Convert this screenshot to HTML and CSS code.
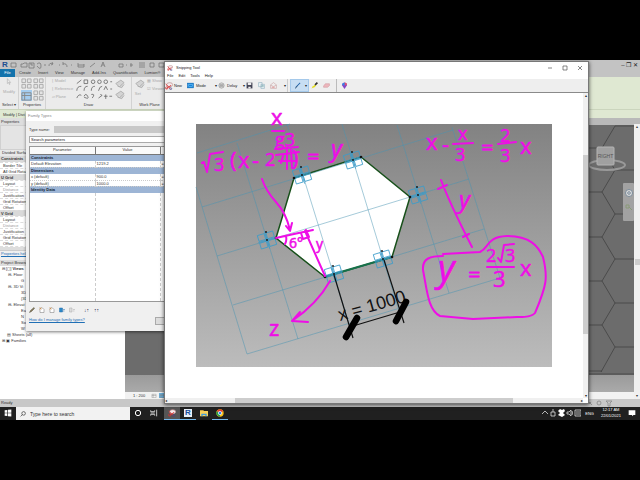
FILE: index.html
```html
<!DOCTYPE html>
<html lang="en">
<head>
<meta charset="utf-8">
<title>Snipping Tool</title>
<link rel="stylesheet" href="styles.css">
</head>
<body>
<svg class="defs" aria-hidden="true">
  <symbol id="i-snip" viewBox="0 0 12 12"><ellipse cx="7" cy="4" rx="4.5" ry="3" fill="#f4eaec" stroke="#b88" /><path d="M1 3l7 7M2 10l7-5" stroke="#d33" stroke-width="1.3"/><circle cx="2.5" cy="9" r="1.8" fill="none" stroke="#c33"/><circle cx="8.5" cy="10" r="1.5" fill="none" stroke="#448"/></symbol>
  <symbol id="i-page" viewBox="0 0 12 12"><path d="M2 2h5l3 3v6H2z" fill="#fff" stroke="#777"/><path d="M1 1l4 4M5 1L1 5" stroke="#e08020"/></symbol>
  <symbol id="i-grid" viewBox="0 0 12 12"><path d="M1 1h4v4H1zM7 1h4v4H7zM1 7h4v4H1zM7 7h4v4H7z" fill="#e4e4e4" stroke="#aaa"/></symbol>
  <symbol id="i-plane" viewBox="0 0 12 12"><path d="M1 6l6-4 4 3-6 5zM3 9l5 2 3-4" fill="#d4d4d4" stroke="#aaa"/></symbol>
  <symbol id="i-box" viewBox="0 0 12 12"><path d="M1 3h10v8H1zM1 6h10M4 3v8" fill="none" stroke="#888"/></symbol>
</svg>

<div class="screen">
<main class="desktop">

<section class="revit" aria-label="Revit">
  <div class="qat">
    <b class="logo">R</b>
    <svg viewBox="0 0 106 8" fill="none" stroke="#777" stroke-width="0.8"><path d="M1 2h5v4H1zM11 6V3h2l1-1h3v4zM19 2h5v5h-5zM21 2v2h2M27 3q4-3 4 2t-4 0M34 4h2M39 5q0-4 4-2M42 1l1 2-2 1M49 4h1M53 3q4-1 4 3M53 1v3M61 4h1M68 2v4h6V3M68 4h6M80 6l5-4M91 6l2-5 2 5M92 4h2"/></svg>
    <svg viewBox="0 0 50 8" fill="none" stroke="#777" stroke-width="0.8"><path d="M3 3h4v3H3zM10 4h1M15 2v4M14 4h3M23 2h6M23 4h6M23 6h6M34 2h4v4h-4zM43 2h5v4h-5z"/></svg>
    <span class="grow"></span>
    <span class="winmarks">– ❐ ✕</span>
  </div>
  <nav class="tabs">
    <a class="file" href="#">File</a><a href="#">Create</a><a href="#">Insert</a><a href="#">View</a><a href="#">Manage</a><a href="#">Add-Ins</a><a href="#">Quantification</a><a href="#">Lumion®</a>
  </nav>
  <div class="ribbon">
    <div class="panel select-panel">
      <svg viewBox="0 0 20 22"><path d="M7 3v9l2-2 2 4 1-1-2-3h3z" fill="#eee" stroke="#aaa"/></svg>
      <span class="dim">Modify</span><span class="cap">Select ▾</span>
    </div>
    <div class="panel props-panel">
      <div class="quad"><svg><use href="#i-grid"/></svg><svg><use href="#i-grid"/></svg><svg class="active"><use href="#i-box"/></svg><svg><use href="#i-grid"/></svg></div>
      <span class="cap">Properties</span>
    </div>
    <div class="panel draw-panel">
      <div class="draw-row">
        <div class="dim stack"><span>⌊ Model</span><span>⌊ Reference</span><span>▱ Plane</span></div>
        <svg viewBox="0 0 42 24" fill="none" stroke="#666" stroke-width="0.9"><path d="M2 6l5-4M10 2h4v4h-4zM2 14q0-5 5-5M10 14q0-5 4-5M18 14q0-5 4-5M26 14q1-5 4-5M32 13l2-4 2 4M2 22q2-5 5-3M10 20q2-4 4 0t-4 1M18 18q5-1 1 4M26 22l4-3-2-1M32 20h4M34 18v5"/><circle cx="20" cy="4" r="2"/><circle cx="27" cy="4" r="2"/><circle cx="34" cy="4" r="2"/><path d="M39 4h2M39 12h2M38 20h3"/></svg>
        <div class="planes"><svg><use href="#i-plane"/></svg><svg><use href="#i-plane"/></svg></div>
      </div>
      <span class="cap">Draw</span>
    </div>
    <div class="panel work-panel">
      <div class="work-row"><div class="dim stack"><svg><use href="#i-plane"/></svg><span>Set</span></div><div class="dim stack"><span>▦ Show</span><span>☑ Viewer</span></div></div>
      <span class="cap">Work Plane</span>
    </div>
    <div class="context-end"></div>
  </div>
  <div class="options">Modify | Divi</div>
  <div class="work">
    <aside class="dock">
      <h2>Properties</h2>
      <div class="preview"></div>
      <div class="type">Divided Surface</div>
      <table class="props">
        <tr class="grp"><td>Constraints</td></tr>
        <tr><td>Border Tile</td></tr><tr><td>All Grid Rotation</td></tr>
        <tr class="grp"><td>U Grid</td></tr>
        <tr><td>Layout</td></tr><tr class="off"><td>Distance</td></tr><tr><td>Justification</td></tr><tr><td>Grid Rotation</td></tr><tr><td>Offset</td></tr>
        <tr class="grp"><td>V Grid</td></tr>
        <tr><td>Layout</td></tr><tr class="off"><td>Distance</td></tr><tr><td>Justification</td></tr><tr><td>Grid Rotation</td></tr><tr><td>Offset</td></tr>
      </table>
      <div class="strip"></div>
      <div class="help"><a href="#">Properties help</a></div>
      <h2 class="browser-title">Project Browser</h2>
      <ul class="tree">
        <li>⊟ [◻] <b>Views</b></li>
        <li class="l2">⊟- Floor</li><li class="l3">G</li>
        <li class="l2">⊟- 3D Vi</li><li class="l3">3D</li><li class="l3">{3D</li>
        <li class="l2">⊟- Elevat</li><li class="l3">Ea</li><li class="l3">N</li><li class="l3">So</li><li class="l3">W</li>
        <li class="l1">▤ Sheets (all)</li><li>⊞ ▣ Families</li>
      </ul>
    </aside>
    <div class="view">
      <div class="viewbar-top"></div>
      <div class="canvas">
        <svg class="hexes" viewBox="0 0 45 250" preserveAspectRatio="xMaxYMin slice" fill="none" stroke="#3c3c3c" stroke-width="0.7"><path d="M26 1L13 23 26 45 13 67 26 89 13 112 26 134 13 156 26 178 13 200 26 222 12 247M26 1H45M26 45H45M26 89H45M26 134H45M26 178H45M26 222H45M13 23H0M13 67H0M13 112H0M13 156H0M13 200H0M13 246H0M0 249H45" /></svg>
        <svg class="cube" viewBox="0 0 40 30"><ellipse cx="19" cy="20" rx="18" ry="5" fill="none" stroke="#999" stroke-width="2"/><rect x="9" y="2" width="17" height="18" rx="1" fill="#a0a0a0" stroke="#b4b4b4"/><text x="17.500" y="13" text-anchor="middle">RIGHT</text></svg>
        <svg class="navbar" viewBox="0 0 11 38"><rect width="11" height="38" rx="1" fill="#a2a2a2"/><circle cx="6" cy="10" r="3.500" fill="#ddd" stroke="#7a8a99"/><circle cx="6" cy="10" r="1.300" fill="none" stroke="#789"/><path d="M3 22h3v3H3zM6 24l3 3" fill="none" stroke="#8a9a78"/></svg>
      </div>
      <div class="viewbar"><span>1 : 200</span><svg><use href="#i-box"/></svg><svg class="blue"><use href="#i-box"/></svg></div>
    </div>
    <div class="vscroll"><i>▴</i><b></b><i>▾</i></div>
  </div>
  <div class="status"><span>Ready</span><svg viewBox="0 0 30 8" fill="none" stroke="#888" stroke-width="0.8"><path d="M2 2l4 4M3 5l2-2M20 2h6l-2 2v3h-2V4z"/><circle cx="13" cy="4" r="2"/></svg></div>
</section>

<section class="dialog" aria-label="Family Types">
  <h1>Family Types</h1>
  <div class="typename"><label for="tn">Type name:</label><select id="tn" disabled><option></option></select></div>
  <input class="search" aria-label="Search parameters" value="Search parameters">
  <div class="tablebox">
  <table>
    <thead><tr><th>Parameter</th><th>Value</th><th></th></tr></thead>
    <tbody>
    <tr class="grp"><td colspan="3">Constraints</td></tr>
    <tr><td>Default Elevation</td><td>1219.2</td><td>=</td></tr>
    <tr class="grp"><td colspan="3">Dimensions</td></tr>
    <tr><td>x (default)</td><td>900.0</td><td>=</td></tr>
    <tr><td>y (default)</td><td>1000.0</td><td>=</td></tr>
    <tr class="grp"><td colspan="3">Identity Data</td></tr>
    <tr class="fill"><td></td><td></td><td></td></tr>
    </tbody>
  </table>
  </div>
  <div class="tools">
    <button aria-label="Edit"><svg viewBox="0 0 12 12"><path d="M1 11l2-4 7-6 1 2-6 6z" fill="#875" stroke="#554"/></svg></button>
    <button aria-label="New"><svg><use href="#i-page"/></svg></button>
    <button aria-label="Delete"><svg><use href="#i-page"/></svg></button>
    <button aria-label="Up"><svg viewBox="0 0 12 12"><path d="M1 2h6v8H1zM8 5h4M8 8h3" fill="#2b88c8" stroke="#2b6fa8"/></svg></button>
    <button aria-label="Down"><svg viewBox="0 0 12 12"><path d="M1 2h5v8H1zM8 5h4M8 8h3" fill="#ddd" stroke="#aaa"/></svg></button>
    <button class="sort" aria-label="Sort ascending">↓↑</button>
    <button class="sort" aria-label="Sort descending">↑↑</button>
  </div>
  <div class="dialog-foot"><a href="#">How do I manage family types?</a><button aria-label="OK"></button></div>
</section>

<section class="snip" aria-label="Snipping Tool">
  <header><svg class="ic"><use href="#i-snip"/></svg><span>Snipping Tool</span><span class="grow"></span><button aria-label="Minimize"><svg viewBox="0 0 8 8"><path d="M2 4h4"/></svg></button><button aria-label="Maximize"><svg viewBox="0 0 8 8"><path d="M2 2h4v4H2z"/></svg></button><button aria-label="Close"><svg viewBox="0 0 8 8"><path d="M2 2l4 4M6 2L2 6"/></svg></button></header>
  <nav class="menu"><a href="#">File</a><a href="#">Edit</a><a href="#">Tools</a><a href="#">Help</a></nav>
  <div class="bar">
    <button class="new"><svg class="big"><use href="#i-snip"/></svg>New</button>
    <button class="mode"><svg viewBox="0 0 12 10"><rect x="1" y="1" width="10" height="8" fill="#1184dc" stroke="#0a66b4"/><rect x="3" y="3" width="6" height="4" fill="none" stroke="#7cc5f5"/></svg>Mode<i>▾</i></button>
    <button class="delay"><svg viewBox="0 0 12 12"><circle cx="6" cy="6" r="4.500" fill="#ddd" stroke="#888"/><path d="M3 5h6M3 7h6" stroke="#666"/></svg>Delay<i>▾</i></button>
    <button class="sq" aria-label="Save"><svg viewBox="0 0 12 12"><path d="M1 1h10v10H1z" fill="#445" /><path d="M3 1h6v4H3zM4 8h4v3H4z" fill="#eee"/></svg></button>
    <button class="sq" aria-label="Copy"><svg viewBox="0 0 12 12"><path d="M1 1h6v7H1zM5 4h6v7H5z" fill="#eef4f6" stroke="#8ab"/><path d="M6 6h4M6 8h4" stroke="#7aa"/></svg></button>
    <button class="send" aria-label="Send"><svg viewBox="0 0 12 12"><path d="M1 5l5-4 5 4v6H1zM1 5l5 3 5-3" fill="#eee" stroke="#c9a2a2"/><path d="M3 9h5" stroke="#d66"/></svg><i>▾</i></button>
    <button class="pen" aria-label="Pen"><svg viewBox="0 0 12 12"><path d="M2 11l1-3 7-7 1 1-7 7z" fill="#1b5fa6"/><path d="M2 11l4-4" stroke="#234"/></svg><i>▾</i></button>
    <button class="sq" aria-label="Highlighter"><svg viewBox="0 0 12 12"><path d="M1 11l2-4 2 2z" fill="#e8e020"/><path d="M3 8l4-4 2 2-4 4z" fill="#e3dc1c"/><path d="M6 4l4-4 2 2-4 4z" fill="#333"/></svg></button>
    <button class="sq" aria-label="Eraser"><svg viewBox="0 0 12 12"><path d="M1 7l3-4h7v3L8 9H1z" fill="#edb6bc" stroke="#d39aa2"/></svg></button>
    <button class="paint" aria-label="Edit with Paint 3D"><svg viewBox="0 0 12 12"><path d="M6 12L2 6q-1-4 4-5 5 1 4 5z" fill="#8646c6"/><path d="M6 1q5 1 4 4L6 6z" fill="#e25072"/><path d="M2 5q0-3 4-4v5z" fill="#2f8be8"/></svg></button>
  </div>
  <div class="content">
    <div class="page">
      <svg class="drawing" viewBox="196 124 356 243" role="img" aria-label="Annotated hexagon">
        <defs><linearGradient id="bg" x1="0" y1="0" x2="0" y2="1"><stop offset="0" stop-color="#828282"/><stop offset="1" stop-color="#bcbcbc"/></linearGradient>
        <g id="node" fill="none" stroke="#3b9cc9" stroke-width="0.8"><g transform="rotate(-17)"><rect x="-8" y="-7" width="7" height="6"/><rect x="1" y="-7" width="7" height="6"/><rect x="-8" y="1" width="7" height="6"/><rect x="1" y="1" width="7" height="6"/><path d="M-9 0H9M0-9V9"/></g><circle cx="-1" cy="-8" r="0.900" fill="#111" stroke="none"/><circle cx="0" cy="0" r="0.900" fill="#111" stroke="none"/></g></defs>
        <rect x="196" y="124" width="356" height="243" fill="url(#bg)"/>
        <path class="hex" d="M294 178L361 157 410 197 392 257 325 277 276 238z"/>
        <path class="lines" d="M197 153L290 124M202 207L453 130M217 256L469 179M233 305L484 229M247 354L500 278M196 187L247 354M237 143L298 339M287 124L349 324M342 124L398 308M397 125L449 293M452 127L500 278"/>
        <path d="M325 277L334 274 392 257" stroke="#17704a" stroke-width="2" fill="none"/>
        <use href="#node" x="302" y="175"/><use href="#node" x="353" y="160"/><use href="#node" x="267" y="240"/><use href="#node" x="418" y="195"/><use href="#node" x="334" y="274"/><use href="#node" x="383" y="259"/>
        <g fill="#111"><circle cx="294" cy="178" r="1.300"/><circle cx="361" cy="157" r="1.300"/><circle cx="410" cy="197" r="1.300"/><circle cx="392" cy="257" r="1.300"/><circle cx="325" cy="277" r="1.300"/><circle cx="276" cy="238" r="1.300"/></g>
        <path d="M334 275L353 338M384 260L404 323M353 326L400 312" stroke="#111" stroke-width="1.200" fill="none"/>
        <text class="dim-text" transform="translate(340 321) rotate(-16)">x = 1000</text>
        <path d="M357 318L346 337M406 302L396 321" stroke="#000" stroke-width="6.500" stroke-linecap="round"/>
        <g class="ink">
          <path d="M202 163l2-1 3 10 3-18 13-2M272 131h12M275 149l23-2M276 155l23-3M287 147v22M279 161h17M291 148l1 20M283 156l-2 7M262 179Q266 191 276 202T290 230M286 226l4 5 2-8M276 238L294 234 313 230M305 231L325 276M301 233l2 6 6-2-3-7M286 236q1 5-1 8M330 281Q317 304 292 321M300 312l-8 9 16 1M453 144l20-1M498 144l18-2M441 180Q450 204 472 247M438 189l9-4M463 237l6-3M487 267h27M498 258l3 4 3-17 10-1"/>
          <path d="M443 254L480 252C490 247 486 237 507 236 530 236 538 246 543 257 548 277 547 285 535 313 531 318 517 317 517 317L473 319 440 316C428 310 427 290 423 270 422 258 431 256 443 256"/>
          <g class="s22"><text x="271" y="125">x</text><text x="238" y="168">x</text><text x="252" y="168">-</text><text x="230" y="168">(</text><text x="292" y="166">)</text><text x="307" y="164">=</text><text x="426" y="150">x</text><text x="442" y="152">-</text><text x="481" y="155">=</text><text x="520" y="154">x</text><text x="468" y="282">=</text><text x="520" y="276">x</text><text x="493" y="287">3</text><text x="269" y="336">z</text></g>
          <g class="s24 slant"><text x="331" y="157">y</text><text x="459" y="208">y</text></g>
          <g class="s18"><text x="214" y="171">3</text><text x="265" y="166">2</text><text x="275" y="146">g3</text><text x="458" y="140">x</text><text x="455" y="161">3</text><text x="500" y="142">2</text><text x="500" y="162">3</text><text x="486" y="262">2</text><text x="505" y="262">3</text></g>
          <text class="s36 slant" x="438" y="281">y</text>
          <g class="s14"><text x="289" y="248">6°</text><text x="316" y="249">y</text></g>
        </g>
      </svg>
    </div>
    <div class="sv"><i>▴</i><b></b><i>▾</i></div>
    <div class="sh"><i>◂</i><b></b><i>▸</i></div>
  </div>
</section>

<footer class="taskbar">
  <button class="start" aria-label="Start"><svg viewBox="0 0 12 12"><path d="M1 2l4-.6v4.200H1zM6 1.300L11 .6v5H6zM1 6.400h4v4.200L1 10zM6 6.400h5v5l-5-.7z" fill="#fff"/></svg></button>
  <label class="find"><svg viewBox="0 0 10 10"><circle cx="6" cy="4" r="3" fill="none" stroke="#222"/><path d="M4 6L1 9" stroke="#222"/></svg><input placeholder="Type here to search" aria-label="Type here to search"></label>
  <button aria-label="Cortana"><svg viewBox="0 0 12 12"><circle cx="6" cy="6" r="4" fill="none" stroke="#fff" stroke-width="1.500"/></svg></button>
  <button aria-label="Task view"><svg viewBox="0 0 12 12"><path d="M1 2v2h6V2M1 10V8h6v2M1 6h6M10 1v10" fill="none" stroke="#ddd" stroke-width="1.300"/></svg></button>
  <button class="on lit" aria-label="Snipping Tool"><svg><use href="#i-snip"/></svg></button>
  <button class="on" aria-label="Revit"><b>R</b></button>
  <button aria-label="Explorer"><svg viewBox="0 0 12 12"><path d="M0 2h5l1 1h6v8H0z" fill="#f7cf59"/><path d="M2 7h8v4H8V9H4v2H2z" fill="#3d9be0"/></svg></button>
  <button class="on" aria-label="Chrome"><svg viewBox="0 0 12 12"><circle cx="6" cy="6" r="5.500" fill="#fbc116"/><path d="M6 6L1.200 3.300A5.500 5.500 0 0 1 10.800 3.300z" fill="#e33b2e"/><path d="M6 6L1.200 3.300A5.500 5.500 0 0 0 6 11.500z" fill="#28a148"/><circle cx="6" cy="6" r="2.500" fill="#3b7ded" stroke="#fff"/></svg></button>
  <span class="grow"></span>
  <svg class="tray" viewBox="0 0 40 12" fill="none" stroke="#ddd"><path d="M1 7l3-3 3 3M10 5h4v4h-4zM12 2v3M26 5h2l2-2v6l-2-2h-2zM31 4q1 2 0 4M34 3h6v6h-6zM35 5h4M35 7h4" stroke-width="0.800"/><path d="M17 4l2-2 2 1 2-1 1 2-2 2 2 2-3 2-4-2 2-2z" fill="#fff" stroke="none"/></svg>
  <span class="lang">ENG</span>
  <time>12:17 AM<br>22/01/2021</time>
  <button class="note" aria-label="Notifications"><svg viewBox="0 0 12 12"><path d="M1 2h10v7H8l-1 2-1-2H1z" fill="#fff"/></svg></button>
</footer>
</main>
</div>
</body>
</html>
```

FILE: styles.css
```css
* { box-sizing: border-box; }
body { margin: 0; background: #000; font: 4px/6px "Liberation Sans", Arial, sans-serif; color: #333; }
h1, h2, ul { margin: 0; padding: 0; font: inherit; list-style: none; }
button { border: 0; padding: 0; margin: 0; background: none; font: inherit; color: inherit; display: flex; align-items: center; }
input, select { font: inherit; color: inherit; margin: 0; border: 0; padding: 0; border-radius: 0; appearance: none; }
a { color: inherit; text-decoration: none; }
i { font-style: normal; }
svg { display: block; flex: none; }
table { border-collapse: collapse; border-spacing: 0; width: 100%; }
td, th { padding: 0; font-weight: normal; }
.defs { position: absolute; width: 0; height: 0; }
.grow { flex: 1; }

.screen { display: grid; grid-template-rows: 60px 1fr 60px; height: 100vh; overflow: hidden; }
.desktop { grid-row: 2; position: relative; display: flex; flex-direction: column; overflow: hidden; min-height: 0; }

/* Revit main window */
.revit { flex: 1; min-height: 0; display: flex; flex-direction: column; background: #c8c8c8; white-space: nowrap; }
.qat { height: 9px; display: flex; align-items: center; padding: 0 2px; background: #c3c3c3; }
.qat svg { height: 8px; }
.qat svg:nth-of-type(1) { width: 106px; }
.qat svg:nth-of-type(2) { width: 50px; }
.logo { font-size: 8px; color: #1d4f91; width: 8px; }
.winmarks { font-size: 6px; color: #222; }
.tabs { height: 8px; display: flex; align-items: center; gap: 7px; background: #c3c3c3; line-height: 8px; }
.file { width: 15px; background: #1473ac; color: #fff; text-align: center; margin-right: -3px; }
.ribbon { height: 32px; display: flex; background: #ebebeb; }
.panel { display: flex; flex-direction: column; align-items: center; border-right: 1px solid #d2d2d2; }
.cap { margin-top: auto; line-height: 8px; }
.dim { color: #aaa; }
.select-panel { width: 19px; }
.select-panel svg { width: 16px; height: 12px; }
.props-panel { width: 27px; }
.quad { display: grid; grid-template-columns: 11px 11px; gap: 1px; padding-top: 1px; }
.quad svg { width: 11px; height: 11px; }
.quad .active { background: #a5cdf0; }
.draw-panel { width: 86px; }
.draw-row, .work-row { display: flex; align-items: flex-start; gap: 2px; padding-top: 1px; }
.draw-row > svg { width: 38px; height: 22px; }
.stack { display: flex; flex-direction: column; gap: 2px; }
.planes svg, .stack svg { width: 10px; height: 11px; }
.work-panel { width: 36px; }
.context-end { flex: 1; background: #dfe8d2; }
.options { height: 9px; line-height: 9px; padding-left: 3px; background: #dfe8d2; border-top: 1px solid #cbd5bd; }
.work { flex: 1; min-height: 0; display: flex; }
.dock { width: 125px; background: #fff; overflow: hidden; }
.dock h2 { height: 7px; line-height: 7px; padding-left: 1px; background: #ddd; }
.preview { height: 25px; background: #e4e4e4; border: 1px solid #d0d0d0; }
.type { height: 6px; padding-left: 2px; background: #e8e8e8; }
.props td { height: 6px; padding-left: 3px; line-height: 5px; border-bottom: 1px dashed #ddd; }
.props .grp td { background: #d9d9d9; padding-left: 1px; font-weight: bold; }
.off { color: #999; }
.strip { height: 4px; border-bottom: 1px solid #ccc; background: #ddd; }
.help { height: 9px; padding-left: 1px; background: #f0f0f0; }
.help a, .dialog-foot a { color: #1f6fb5; text-decoration: underline; }
.dock .browser-title { height: 6px; line-height: 6px; }
.tree li { height: 6px; padding-left: 2px; }
.tree .l1 { padding-left: 7px; }
.tree .l2 { padding-left: 8px; }
.tree .l3 { padding-left: 21px; }
.view { flex: 1; display: flex; flex-direction: column; min-width: 0; }
.viewbar-top { height: 7px; background: #b9b9b9; }
.canvas { flex: 1; min-height: 0; position: relative; overflow: hidden; background: linear-gradient(#6c6c6c, #6c6c6c 250px, #9a9a9a 250px, #aaa); }
.hexes { width: 45px; height: 250px; margin-left: auto; }
.cube { position: absolute; right: 6px; top: 20px; width: 40px; height: 30px; font-size: 5px; fill: #555; }
.navbar { position: absolute; right: 0; top: 58px; width: 11px; height: 38px; }
.viewbar { height: 7px; background: #f2f2f2; display: flex; align-items: center; gap: 2px; padding-left: 8px; }
.viewbar span { width: 16px; }
.viewbar svg { width: 6px; height: 5px; }
.viewbar .blue { background: #6ab6e6; }
.vscroll { width: 6px; background: #f0f0f0; display: flex; flex-direction: column; justify-content: space-between; align-items: center; border-top: 6px solid #b9b9b9; }
.vscroll b { width: 5px; height: 6px; background: #cdcdcd; margin-top: auto; margin-bottom: auto; }
.status { height: 8px; background: #c8c8c8; display: flex; justify-content: space-between; align-items: center; padding: 0 24px 0 1px; }
.status svg { width: 30px; height: 8px; }

/* Family Types dialog */
.dialog { position: absolute; left: 26px; top: 51px; width: 170px; height: 220px; background: #f0f0f0; box-shadow: 0 1px 3px #0008; padding: 0 3px; display: flex; flex-direction: column; white-space: nowrap; }
.dialog h1 { height: 10px; line-height: 9px; margin: 0 -3px; padding-left: 2px; background: #fff; color: #888; }
.typename { height: 15px; display: flex; align-items: center; gap: 4px; padding-top: 2px; }
.typename select { flex: 1; height: 7px; background: #c8c8c8; opacity: 1; }
.search { height: 7px; background: #fff; border: 1px solid #aaa; padding-left: 1px; color: #111; }
.tablebox { margin-top: 3px; height: 156px; border: 1px solid #999; background: #fff; }
.tablebox table { height: 100%; table-layout: fixed; }
.tablebox th { height: 7px; border-bottom: 1px solid #777; border-right: 1px solid #777; text-align: center; line-height: 6px; background: #fafafa; }
.tablebox th:nth-child(1), .tablebox th:nth-child(2) { width: 65px; }
.tablebox td { height: 6px; line-height: 5px; padding-left: 1px; border-bottom: 1px dotted #ccc; border-right: 1px dashed #ccc; }
.tablebox .grp td { height: 7px; line-height: 6px; background: #9db5d5; color: #123; font-weight: bold; border: 0; }
.tablebox .fill td { height: auto; border-bottom: 0; }
.tools { height: 15px; display: flex; align-items: center; gap: 4px; }
.tools svg { width: 6px; height: 6px; }
.tools .sort { width: 6px; font-size: 5px; color: #124; }
.tools .sort:nth-child(6) { margin-left: 5px; }
.dialog-foot { display: flex; justify-content: space-between; }
.dialog-foot button { width: 38px; height: 8px; background: #ddd; border: 1px solid #aaa; }

/* Snipping Tool window */
.snip { position: absolute; left: 164px; right: 51px; top: 1px; bottom: 16px; background: #fff; border: 1px solid #777; box-shadow: 0 1px 4px #000a; display: flex; flex-direction: column; color: #222; }
.snip header { height: 11px; display: flex; align-items: center; gap: 3px; padding: 0 2px; }
.snip header svg { width: 6px; height: 6px; }
.snip header button { width: 12px; justify-content: center; }
.snip header button svg { width: 8px; height: 8px; fill: none; stroke: #555; stroke-width: 0.7px; }
.menu { height: 6px; display: flex; gap: 5px; padding-left: 2px; }
.bar { height: 14px; background: #eee; border-bottom: 1px solid #8a8a8a; display: flex; align-items: stretch; }
.bar button { gap: 2px; }
.bar svg { width: 7px; height: 7px; }
.bar i { margin-left: auto; margin-right: 1px; }
.bar .new { width: 22px; gap: 1px; }
.bar .big { width: 8px; height: 8px; }
.bar .mode { width: 31px; }
.bar .delay { width: 28px; }
.bar .sq { width: 12px; }
.bar .send { width: 18px; border-right: 1px solid #ccc; margin-right: 2px; }
.bar .pen { width: 19px; padding-left: 3px; background: #c7def3; border: 1px solid #a5c9ea; margin-right: 2px; }
.bar .paint { border-left: 1px solid #bbb; padding-left: 4px; margin-left: 1px; }
.content { flex: 1; min-height: 0; display: grid; grid-template-columns: 1fr 5px; grid-template-rows: 1fr 5px; }
.page { min-height: 0; padding: 31px 31px 0; }
.drawing { width: 100%; overflow: visible; }
.sv, .sh { background: #f0f0f0; display: flex; justify-content: space-between; align-items: center; line-height: 5px; }
.sv { flex-direction: column; }
.sv b { width: 5px; height: 179px; background: #cdcdcd; margin-bottom: 2px; }
.sh b { width: 278px; height: 5px; background: #cdcdcd; }
.hex { fill: #fff; stroke: #17501a; stroke-width: 1.5px; }
.lines { fill: none; stroke: #4a94b2; stroke-width: 0.5px; }
.dim-text { font-size: 18px; fill: #111; }
.ink { fill: none; stroke: #ee0ee6; stroke-width: 2px; stroke-linecap: round; stroke-linejoin: round; }
.ink text { font-family: "Open Sans", sans-serif; fill: #ee0ee6; stroke-width: 0.6px; }
.ink .slant { font-style: italic; }
.s14 { font-size: 14px; }
.s18 { font-size: 18px; }
.s22 { font-size: 22px; }
.s24 { font-size: 24px; }
.s36 { font-size: 36px; }

/* Taskbar */
.taskbar { height: 13px; background: #202020; color: #fff; display: flex; align-items: stretch; }
.taskbar button { width: 16px; justify-content: center; border-bottom: 1px solid transparent; }
.taskbar svg { width: 8px; height: 8px; }
.find { width: 114px; background: #f2f2f2; display: flex; align-items: center; gap: 4px; padding-left: 4px; }
.find svg { width: 6px; height: 6px; }
.find input { width: 80px; background: none; font-size: 5px; }
.find input::placeholder { color: #333; opacity: 1; }
.taskbar .on { border-bottom-color: #76b9ed; }
.taskbar .lit { background: #555; margin-left: 2px; }
.taskbar button b { width: 8px; height: 8px; background: #e8f0fa; color: #1b4f9c; font-size: 8px; line-height: 8px; text-align: center; }
.taskbar .tray { width: 40px; height: 12px; }
.lang { line-height: 13px; padding: 0 7px 0 4px; }
time { text-align: center; padding-right: 3px; }
```
